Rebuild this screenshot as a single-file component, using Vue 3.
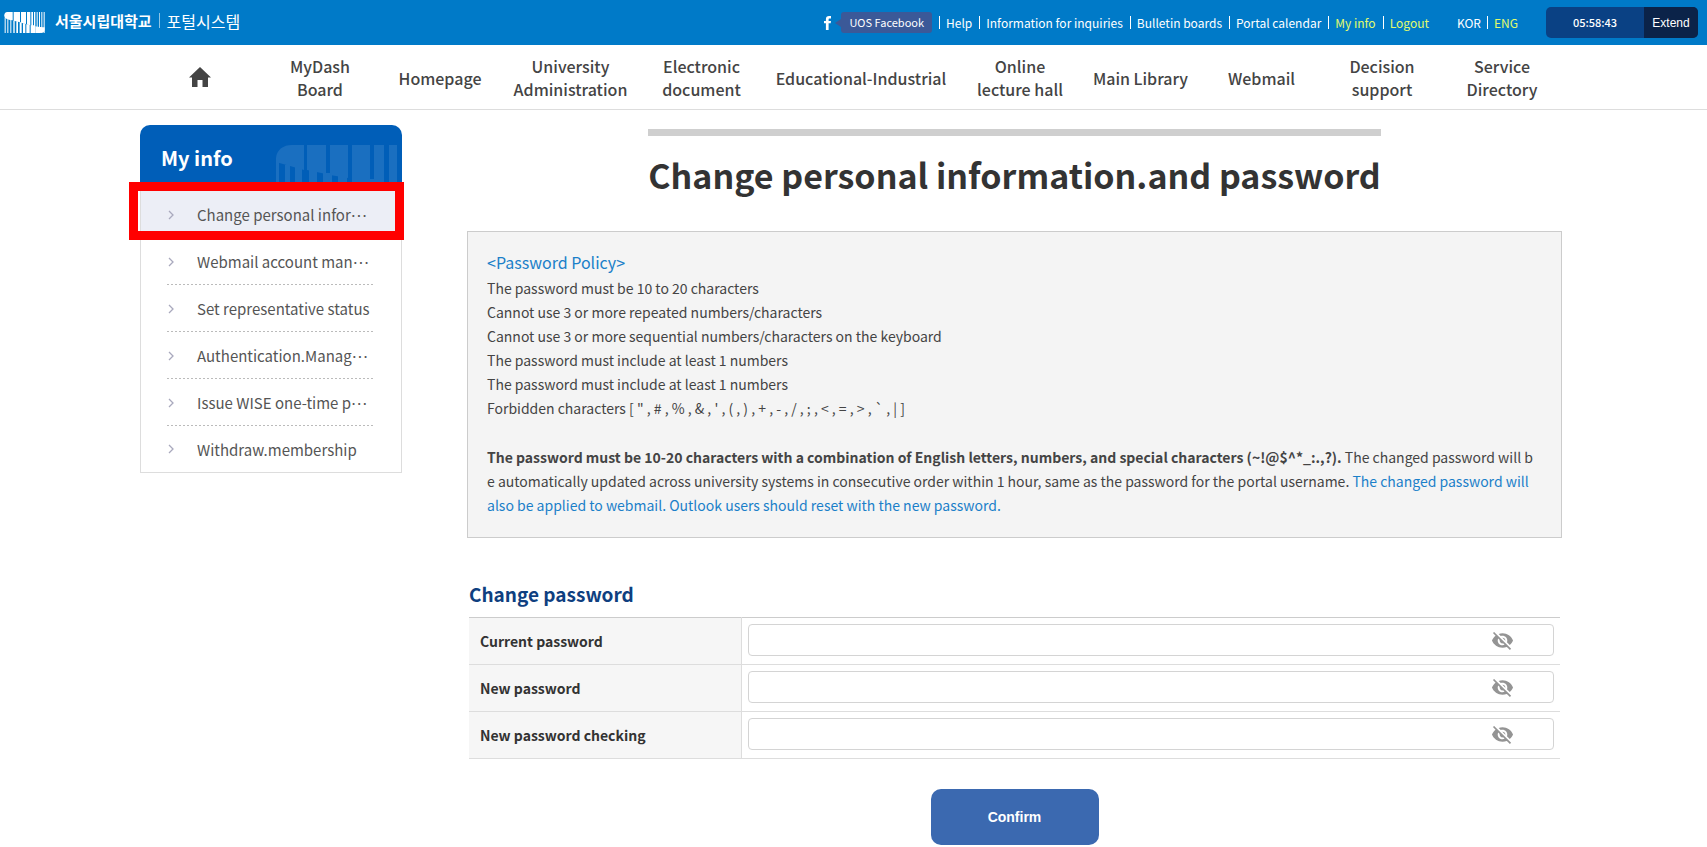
<script setup>
import { ref } from 'vue'

const topLinks = [
  { text: 'Help' },
  { text: 'Information for inquiries' },
  { text: 'Bulletin boards' },
  { text: 'Portal calendar' },
  { text: 'My info', accent: true },
  { text: 'Logout', accent: true },
]

const navItems = [
  ['MyDash', 'Board'],
  ['Homepage'],
  ['University', 'Administration'],
  ['Electronic', 'document'],
  ['Educational-Industrial'],
  ['Online', 'lecture hall'],
  ['Main Library'],
  ['Webmail'],
  ['Decision', 'support'],
  ['Service', 'Directory'],
]

const sideItems = [
  { text: 'Change personal infor', cut: true },
  { text: 'Webmail account man', cut: true },
  { text: 'Set representative status' },
  { text: 'Authentication.Manag', cut: true },
  { text: 'Issue WISE one-time p', cut: true },
  { text: 'Withdraw.membership' },
]

const rules = [
  'The password must be 10 to 20 characters',
  'Cannot use 3 or more repeated numbers/characters',
  'Cannot use 3 or more sequential numbers/characters on the keyboard',
  'The password must include at least 1 numbers',
  'The password must include at least 1 numbers',
  'Forbidden characters [ " , # , % , & , \' , ( , ) , + , - , / , ; , < , = , > , ` , | ]',
]

const fields = ref([
  { id: 'current', label: 'Current password', value: '', shown: false },
  { id: 'new', label: 'New password', value: '', shown: false },
  { id: 'check', label: 'New password checking', value: '', shown: false },
])
</script>

<template>
  <div class="page">
    <header class="topbar">
      <a href="#" class="brand">
        <svg class="brand-mark" viewBox="0 0 123 63" aria-hidden="true">
          <g fill="#fff">
            <path d="M10 0H26V25C16 24 6 22 2 16C-1 7 2 1 10 0Z" />
            <path d="M29 0H48V31L29 26Z" />
            <path d="M51 0H66V36L51 32Z" />
            <path d="M69 0H79V40L69 37Z" />
            <path d="M82 0H87V63H82ZM90 0H94V63H90ZM98 0H101V63H98ZM105 0H108V63H105ZM112 0H115V63H112ZM119 0H122V63H119Z" />
            <path d="M2 18H5V63H2ZM10 22H13V63H10ZM19 24H22V63H19ZM28 26H32V63H28ZM37 28H42V63H37ZM47 31H53V63H47ZM57 34H64V63H57ZM67 37H77V63H67ZM80 40H92V63H80Z" />
            <path d="M94 43C106 45 116 46 122 46V53C122 60 117 62 108 63H94Z" />
          </g>
        </svg>
        <span class="brand-text">
          <span class="brand-name">서울시립대학교</span>
          <span class="brand-line"></span>
          <span class="brand-sub">포털시스템</span>
        </span>
      </a>
      <div class="top-right">
        <a href="#" class="facebook">
          <svg class="fb" viewBox="0 0 7 14" aria-hidden="true">
            <path fill="#fff" d="M7 0V2.4H5.7C4.8 2.4 4.6 2.8 4.6 3.5V5H7L6.7 7.3H4.6V14H1.9V7.3H0V5H1.9V3.2C1.9 1.1 3.1 0 5 0Z" />
          </svg>
          <span class="fb-badge">UOS Facebook</span>
        </a>
        <nav class="top-links">
          <a v-for="l in topLinks" :key="l.text" href="#" :class="{ accent: l.accent }">{{ l.text }}</a>
        </nav>
        <div class="langs">
          <a href="#">KOR</a>
          <a href="#" class="accent">ENG</a>
        </div>
        <div class="session">
          <span class="time">05:58:43</span>
          <button type="button">Extend</button>
        </div>
      </div>
    </header>

    <div class="nav-wrap">
      <nav class="container main-nav">
        <a href="#" class="home" aria-label="Home">
          <svg viewBox="0 0 22 20" aria-hidden="true">
            <path fill="#444" d="M11 0L22 10.5H19V20H13.500V13H8.500V20H3V10.500H0Z" />
          </svg>
        </a>
        <a v-for="n in navItems" :key="n[0]" href="#">
          <span v-for="line in n" :key="line">{{ line }}</span>
        </a>
      </nav>
    </div>

    <div class="container body">
      <aside class="side">
        <div class="side-head">
          <h2>My info</h2>
          <svg class="watermark" viewBox="0 0 121 46" aria-hidden="true">
            <path d="M28 0V25L0 17C-1 6 6 0 16 0ZM31 0H50V29L31 25ZM54 0H72V33L54 30ZM76 0H94V37L76 34ZM98 0H108V46H98ZM113 0H121V46H113Z" />
            <path d="M0 17H3V46H0ZM9 20H14V46H9ZM19 22H26V46H19ZM33 25H41V46H33ZM47 28H56V46H47ZM62 31H71V46H62ZM76 34H98V46H76Z" />
          </svg>
        </div>
        <ul class="side-list">
          <li v-for="(s, i) in sideItems" :key="s.text" :class="{ active: i === 0 }">
            <a href="#">
              <svg class="chev" viewBox="0 0 6 10" aria-hidden="true">
                <path d="M1 1L5 5L1 9" fill="none" stroke="#a9a9bd" stroke-width="1.300" />
              </svg>
              <span>{{ s.text }}<span v-if="s.cut" class="dots">…</span></span>
            </a>
          </li>
        </ul>
      </aside>

      <main class="content">
        <h1>Change personal information.and password</h1>

        <section class="policy">
          <h2>&lt;Password Policy&gt;</h2>
          <ul>
            <li v-for="(r, i) in rules" :key="i">{{ r }}</li>
          </ul>
          <p>
            <strong>The password must be 10-20 characters with a combination of English letters, numbers, and special characters (~!@$^*_:.,?).</strong>
            The changed password will b<br />e automatically updated across university systems in consecutive order within 1 hour, same as the password for the portal username.
            <em>The changed password will<br />also be applied to webmail. Outlook users should reset with the new password.</em>
          </p>
        </section>

        <form @submit.prevent>
          <h3>Change password</h3>
          <table>
            <tbody>
              <tr v-for="f in fields" :key="f.id">
                <th scope="row"><label :for="f.id">{{ f.label }}</label></th>
                <td>
                  <div class="field">
                    <input :id="f.id" v-model="f.value" :type="f.shown ? 'text' : 'password'" />
                    <button type="button" class="eye" aria-label="Show password" @click="f.shown = !f.shown">
                      <svg viewBox="0 0 24 24" aria-hidden="true">
                        <path fill="#949494" d="M12 7c2.760 0 5 2.240 5 5 0 .65-.13 1.260-.36 1.830l2.920 2.920c1.510-1.260 2.700-2.890 3.430-4.750-1.730-4.390-6-7.500-11-7.500-1.400 0-2.740.25-3.980.7l2.160 2.160C10.740 7.130 11.350 7 12 7zM2 4.270l2.280 2.280.46.46C3.080 8.300 1.780 10.020 1 12c1.730 4.390 6 7.500 11 7.500 1.550 0 3.030-.3 4.380-.84l.42.42L19.730 22 21 20.730 3.270 3 2 4.270zM7.530 9.800l1.550 1.550c-.05.21-.08.43-.08.65 0 1.660 1.340 3 3 3 .22 0 .44-.03.65-.08l1.550 1.550c-.67.33-1.410.53-2.200.53-2.760 0-5-2.240-5-5 0-.79.2-1.530.53-2.200zm4.310-.78l3.150 3.150.02-.16c0-1.660-1.340-3-3-3l-.17.01z" />
                      </svg>
                    </button>
                  </div>
                </td>
              </tr>
            </tbody>
          </table>
          <button type="submit" class="confirm">Confirm</button>
        </form>
      </main>
    </div>
  </div>
</template>

<style>
body {
  margin: 0;
  background: #fff;
}
</style>

<style scoped>
.page {
  font-family: "Noto Sans CJK KR", "Noto Sans", sans-serif;
  color: #444;
}
.page * {
  box-sizing: border-box;
}
a {
  color: inherit;
  text-decoration: none;
}
h1, h2, h3, p, ul {
  margin: 0;
  padding: 0;
}
ul {
  list-style: none;
}
button {
  border: 0;
  padding: 0;
  cursor: pointer;
}
svg {
  display: block;
}
.container {
  max-width: 1427px;
  margin: 0 auto;
  padding-right: 5px;
}

/* top bar */
.topbar {
  display: flex;
  justify-content: space-between;
  align-items: center;
  height: 45px;
  padding: 0 9px 0 4px;
  background: #007ac8;
  color: #fff;
  font-size: 12px;
  line-height: 20px;
}
.brand,
.brand-text {
  display: flex;
  align-items: center;
}
.brand-mark {
  width: 41px;
  height: 21px;
}
.brand-text {
  padding: 0 0 4px 10px;
}
.brand-name {
  font-size: 15px;
  font-weight: 700;
}
.brand-line {
  width: 1px;
  height: 15px;
  margin: 0 7px;
  background: #8cc4e6;
}
.brand-sub {
  font-size: 16px;
}
.top-right,
.facebook,
.top-links,
.langs {
  display: flex;
  align-items: center;
}
.fb {
  width: 7px;
  height: 14px;
}
.fb-badge {
  position: relative;
  margin: 0 0 0 10px;
  padding: 0 8px;
  border-radius: 3px;
  background: #3b5998;
  font-size: 11px;
  line-height: 21px;
}
.fb-badge::before {
  content: "";
  position: absolute;
  left: -6px;
  top: 7px;
  border: 4px solid transparent;
  border-left: 0;
  border-right: 6px solid #3b5998;
}
.top-links a,
.langs a {
  display: flex;
  align-items: center;
}
.top-links a::before,
.langs a + a::before {
  content: "";
  width: 1px;
  height: 13px;
  margin: 0 6px;
  background: #fff;
}
.top-links .accent,
.langs .accent {
  color: #e2fb6c;
}
.top-links a::before {
  margin-left: 7px;
}
.langs {
  margin: 0 28px;
}
.session {
  display: flex;
  overflow: hidden;
  height: 31px;
  border-radius: 5px;
  background: #0a4184;
  font-size: 11px;
  font-weight: 500;
  line-height: 31px;
}
.time {
  width: 98px;
  text-align: center;
}
.session button {
  width: 54px;
  background: #0b2349;
  color: #fff;
  font-family: "Liberation Sans", Arial, sans-serif;
  font-size: 12px;
}

/* main navigation */
.nav-wrap {
  border-bottom: 1px solid #ddd;
}
.main-nav {
  display: grid;
  grid-template-columns: 120fr 120fr 120fr 141fr 121fr 198fr 120fr 121fr 121fr 120fr 120fr;
  height: 64px;
}
.main-nav a {
  display: flex;
  flex-direction: column;
  align-items: center;
  justify-content: center;
  padding-top: 2px;
  font-size: 16px;
  font-weight: 500;
  line-height: 23px;
  white-space: nowrap;
}
.main-nav .home {
  padding-top: 0;
}
.home svg {
  width: 22px;
  height: 20px;
}

/* layout */
.body {
  display: flex;
  align-items: flex-start;
  gap: 65px;
  padding-top: 15px;
}

/* side menu */
.side {
  flex: none;
  width: 262px;
}
.side-head {
  display: flex;
  justify-content: space-between;
  align-items: flex-end;
  height: 66px;
  padding: 0 5px 0 21px;
  border-radius: 10px 10px 0 0;
  background: #005eb8;
  color: #fff;
}
.side-head h2 {
  align-self: center;
  font-size: 20px;
  font-weight: 700;
  line-height: 30px;
}
.watermark {
  width: 121px;
  height: 46px;
  fill: #1a6fc0;
}
.side-list {
  border: 1px solid #ddd;
  border-top: 0;
}
.side-list a {
  display: flex;
  align-items: center;
  gap: 23px;
  height: 47px;
  margin: 0 26px;
  background: repeating-linear-gradient(90deg, #bbb 0 2px, transparent 2px 4px) bottom / 100% 1px no-repeat;
  color: #555;
  font-size: 15px;
  white-space: nowrap;
}
.side-list li:last-child a,
.side-list .active a {
  background: none;
}
.side-list li:last-child a {
  height: 46px;
}
.side-list .active {
  position: relative;
  background: #eceef6;
}
.side-list .active::after {
  content: "";
  position: absolute;
  inset: -9px -3px -2px -12px;
  border: 9px solid #f00;
  pointer-events: none;
}
.dots {
  line-height: 0;
  vertical-align: 4px;
}
.chev {
  flex: none;
  width: 6px;
  height: 10px;
  margin-left: 1px;
}

/* content */
.content {
  flex: 1;
  min-width: 0;
}
h1 {
  width: fit-content;
  margin: 4px auto 31px;
  padding-top: 14px;
  border-top: 7px solid #cfcfcf;
  color: #333;
  font-size: 34px;
  font-weight: 700;
  line-height: 50px;
  white-space: nowrap;
}
.policy {
  padding: 18px 19px 20px;
  border: 1px solid #ccc;
  background: #f4f4f4;
  font-size: 14px;
  line-height: 24px;
}
.policy h2 {
  color: #1b80c9;
  font-size: 16px;
  font-weight: 400;
  line-height: 25px;
}
.policy ul {
  padding-top: 1px;
}
.policy p {
  margin-top: 25px;
}
.policy em {
  color: #1b80c9;
  font-style: normal;
}
h3 {
  margin: 41px 0 8px;
  color: #0f3f80;
  font-size: 19px;
  font-weight: 700;
  line-height: 30px;
}
form {
  padding: 0 2px;
}
table {
  width: 100%;
  border-collapse: collapse;
  border-top: 1px solid #ccc;
}
th,
td {
  height: 47px;
  padding: 0 6px;
  border-bottom: 1px solid #ddd;
}
td {
  padding-bottom: 2px;
}
th {
  width: 272px;
  padding-left: 11px;
  border-right: 1px solid #ddd;
  background: #f6f6f6;
  color: #333;
  font-size: 14px;
  font-weight: 700;
  text-align: left;
}
.field {
  display: flex;
  align-items: center;
  height: 32px;
  padding-right: 39px;
  border: 1px solid #d4d4d4;
  border-radius: 4px;
}
.field input {
  flex: 1;
  min-width: 0;
  height: 100%;
  padding: 0 8px;
  border: 0;
  outline: 0;
  background: none;
  font-size: 14px;
}
.eye {
  background: none;
}
.eye svg {
  width: 23px;
  height: 23px;
}
.confirm {
  display: block;
  width: 168px;
  height: 56px;
  margin: 30px auto 0;
  border-radius: 10px;
  background: #3b69b0;
  color: #fff;
  font-family: "Liberation Sans", Arial, sans-serif;
  font-size: 14px;
  font-weight: 700;
}
</style>
